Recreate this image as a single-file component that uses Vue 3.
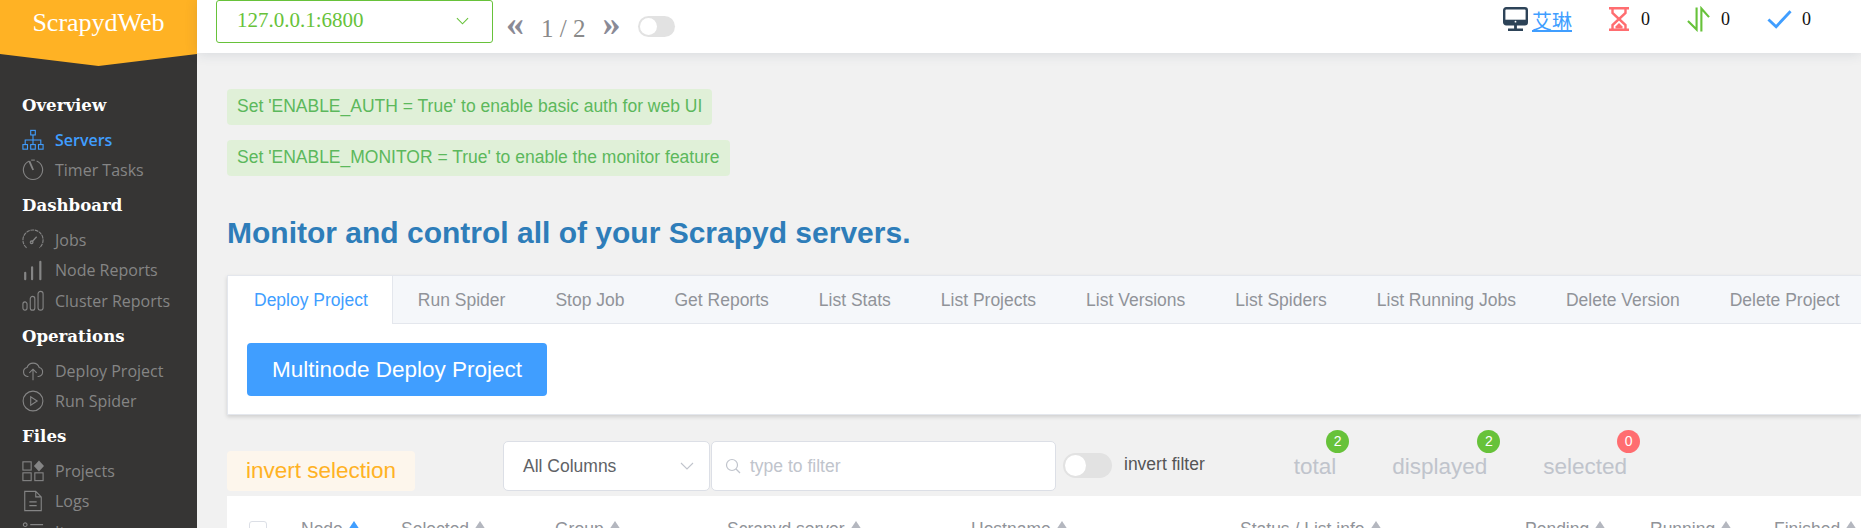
<script setup>
const groups = [
  { title: 'Overview', items: [{ label: 'Servers', icon: 'servers', active: true }, { label: 'Timer Tasks', icon: 'timer' }] },
  { title: 'Dashboard', items: [{ label: 'Jobs', icon: 'gauge' }, { label: 'Node Reports', icon: 'bars' }, { label: 'Cluster Reports', icon: 'pills' }] },
  { title: 'Operations', items: [{ label: 'Deploy Project', icon: 'cloud' }, { label: 'Run Spider', icon: 'play' }] },
  { title: 'Files', items: [{ label: 'Projects', icon: 'grid' }, { label: 'Logs', icon: 'doc' }, { label: 'Items', icon: 'list' }] }
]
const tabs = ['Deploy Project', 'Run Spider', 'Stop Job', 'Get Reports', 'List Stats', 'List Projects', 'List Versions', 'List Spiders', 'List Running Jobs', 'Delete Version', 'Delete Project']
const counters = [
  { label: 'total', count: 2, tone: 'green' },
  { label: 'displayed', count: 2, tone: 'green' },
  { label: 'selected', count: 0, tone: 'red' }
]
const columns = [
  { label: 'Node', w: 100, on: true },
  { label: 'Selected', w: 154 },
  { label: 'Group', w: 172 },
  { label: 'Scrapyd server', w: 244 },
  { label: 'Hostname', w: 269 },
  { label: 'Status / List info', w: 285 },
  { label: 'Pending', w: 125 },
  { label: 'Running', w: 124 },
  { label: 'Finished', w: 90 }
]
</script>

<template>
  <div class="page">
    <aside class="side">
      <div class="logo">ScrapydWeb</div>
      <nav class="nav">
        <section v-for="g in groups" :key="g.title" class="group">
          <h3 class="group-title">{{ g.title }}</h3>
          <a v-for="it in g.items" :key="it.label" class="nav-item" :class="{ active: it.active }">
            <svg class="nav-icon" viewBox="0 0 24 24" fill="none" stroke="currentColor" stroke-width="1.2">
              <template v-if="it.icon === 'servers'">
                <rect x="9.5" y="1.5" width="5" height="5" /><rect x="1" y="17" width="5" height="5" /><rect x="9.5" y="17" width="5" height="5" /><rect x="18" y="17" width="5" height="5" />
                <path d="M12 6.5V17M3.5 17v-5h17v5" />
              </template>
              <template v-else-if="it.icon === 'timer'">
                <path d="M8 2.2A10.5 10.5 0 1 0 16 2.2" /><path d="M8 2.2 12.2 12" stroke-width="2" /><path d="M10 1.2h4" />
              </template>
              <template v-else-if="it.icon === 'gauge'">
                <path d="M5 20.500A11 11 0 1 1 19 20.500" stroke-dasharray="4 0.8" /><path d="M10.500 14.500 16 8.500" stroke-width="1.400" /><circle cx="10.500" cy="14.500" r="1.500" />
              </template>
              <template v-else-if="it.icon === 'bars'">
                <path d="M3.500 15v7M11 9v13M20 3v19" stroke-width="2.400" stroke-linecap="round" />
              </template>
              <template v-else-if="it.icon === 'pills'">
                <rect x="1" y="13" width="4.500" height="9" rx="2.250" /><rect x="9" y="7" width="5" height="15" rx="2.500" /><rect x="17.500" y="1.500" width="5.500" height="20.500" rx="2.700" />
              </template>
              <template v-else-if="it.icon === 'cloud'">
                <path d="M7 18H6A5 5 0 0 1 5.500 8.200 7 7 0 0 1 18.800 8.200 5 5 0 0 1 18 18h-1" /><path d="M12 22V10M8 14l4-4 4 4" />
              </template>
              <template v-else-if="it.icon === 'play'">
                <circle cx="12" cy="12" r="10.800" /><path d="M9.500 7.500v9l7-4.500z" />
              </template>
              <template v-else-if="it.icon === 'grid'">
                <rect x="1" y="2" width="9" height="9" /><rect x="1" y="14" width="9" height="8.500" /><rect x="14" y="14" width="9" height="8.500" />
                <path d="M18.500 0.500 24 6.500l-5.500 6-5.500-6z" fill="currentColor" stroke="none" />
              </template>
              <template v-else-if="it.icon === 'doc'">
                <path d="M3 1.500h12l6 6v15H3zM15 1.500v6h6M8 13h8M8 17h8" />
              </template>
              <template v-else>
                <circle cx="3.500" cy="4" r="2" /><circle cx="3.500" cy="12" r="2" /><circle cx="3.500" cy="20" r="2" /><path d="M9 4h14M9 12h14M9 20h14" />
              </template>
            </svg>
            <span>{{ it.label }}</span>
          </a>
        </section>
      </nav>
    </aside>

    <div class="right">
      <header class="top">
        <div class="host-select">
          <span>127.0.0.1:6800</span>
          <svg class="chev" viewBox="0 0 14 8" fill="none" stroke="currentColor" stroke-width="1.200"><path d="M1 1l6 6 6-6" /></svg>
        </div>
        <span class="pager-arrow first">«</span>
        <span class="pager-num">1 / 2</span>
        <span class="pager-arrow">»</span>
        <span class="mini-switch"><i></i></span>

        <div class="status">
          <a class="user">
            <svg class="mon" viewBox="0 0 25 24" fill="none" stroke="#2d4358" stroke-width="2.400">
              <rect x="1.200" y="1.200" width="22.600" height="16" rx="2" />
              <path d="M1 14.500h23" stroke-width="3.600" />
              <path d="M12.500 17v5M5 22.800h15" stroke-width="2.800" />
              <circle cx="12.500" cy="14.700" r="0.900" fill="#fff" stroke="none" />
            </svg>
            <span class="user-name"><span class="gap"> </span><span class="u-text">艾琳</span></span>
          </a>
          <span class="stat hour">
            <svg viewBox="0 0 20 24" fill="none" stroke="#ff6d70" stroke-width="2.400"><path d="M0 1.300h20M0 22.700h20" /><path d="M3.500 2v4L10 12l-6.500 6v4M16.500 2v4L10 12l6.500 6v4" /><path d="M6.500 19.500 10 16l3.500 3.500v2h-7z" fill="#ff6d70" stroke="none" /></svg>
            <b>0</b>
          </span>
          <span class="stat updown">
            <svg viewBox="0 0 24 26" fill="none" stroke="#67c23a" stroke-width="2.200"><path d="M10 1v23L1 15" /><path d="M15 26V2l8 9" /></svg>
            <b>0</b>
          </span>
          <span class="stat check">
            <svg viewBox="0 0 26 20" fill="none" stroke="#409eff" stroke-width="3"><path d="M1.500 10.500 9.500 18 24.500 2" /></svg>
            <b>0</b>
          </span>
        </div>
      </header>

      <main class="main">
        <div class="alert first-alert">Set 'ENABLE_AUTH = True' to enable basic auth for web UI</div>
        <div class="alert">Set 'ENABLE_MONITOR = True' to enable the monitor feature</div>
        <h1 class="title">Monitor and control all of your Scrapyd servers.</h1>

        <section class="card">
          <div class="tabs">
            <div v-for="(t, i) in tabs" :key="t" class="tab" :class="{ on: i === 0 }">{{ t }}</div>
          </div>
          <div class="card-body">
            <button class="primary" type="button">Multinode Deploy Project</button>
          </div>
        </section>

        <div class="tools">
          <div class="invert">invert selection</div>
          <div class="col-select">
            <span>All Columns</span>
            <svg viewBox="0 0 14 8" fill="none" stroke="#c0c4cc" stroke-width="1.100"><path d="M1 1l6 6 6-6" /></svg>
          </div>
          <div class="search">
            <svg viewBox="0 0 16 16" fill="none" stroke="#c0c4cc" stroke-width="1.200"><circle cx="7" cy="7" r="5.500" /><path d="M11 11l4 4" /></svg>
            <span>type to filter</span>
          </div>
          <span class="big-switch"><i></i></span>
          <span class="invert-label">invert filter</span>
          <div class="counters">
            <span v-for="c in counters" :key="c.label" class="counter">
              {{ c.label }}
              <em class="badge" :class="c.tone">{{ c.count }}</em>
            </span>
          </div>
        </div>

        <div class="table">
          <span class="checkbox"></span>
          <span v-for="c in columns" :key="c.label" class="th" :style="{ width: c.w + 'px' }">
            {{ c.label }}<i class="sort" :class="{ on: c.on }"></i>
          </span>
        </div>
      </main>
    </div>
  </div>
</template>

<style scoped>
.page {
  display: flex;
  width: 1861px;
  height: 528px;
  overflow: hidden;
  background: #f1f1f1;
  font-family: "Liberation Sans", Arial, sans-serif;
}
.side {
  flex: 0 0 197px;
  background: #363534;
  color: #858585;
}
.logo {
  height: 66px;
  padding-top: 8px;
  box-sizing: border-box;
  background: #ffb224;
  clip-path: polygon(0 0, 100% 0, 100% 54px, 50% 66px, 0 54px);
  color: #fff;
  text-align: center;
  font: 26px/30px "Liberation Serif", serif;
}
.nav {
  padding: 26px 0 0 22px;
}
.group {
  margin-bottom: 7px;
}
.group-title {
  margin: 0 0 6.500px;
  color: #fff;
  font: bold 16.600px/26px "DejaVu Serif", serif;
}
.nav-item {
  display: flex;
  align-items: center;
  height: 30.400px;
  font: 16px/30px "Open Sans", sans-serif;
}
.nav-item.active {
  color: #409eff;
  font-weight: 600;
}
.nav-icon {
  flex: none;
  width: 22px;
  height: 22px;
  margin-right: 11px;
}
.right {
  flex: 1;
  min-width: 0;
}
.top {
  position: relative;
  z-index: 1;
  display: flex;
  align-items: flex-start;
  height: 53px;
  padding-left: 19px;
  background: #fff;
  box-shadow: 0 1px 12px rgba(40, 60, 90, 0.13);
}
.host-select {
  display: flex;
  align-items: center;
  justify-content: space-between;
  box-sizing: border-box;
  width: 277px;
  height: 43px;
  padding: 0 23px 2px 20px;
  border: 1px solid #67c23a;
  border-radius: 3px;
  color: #67c23a;
  font: 21px "Liberation Serif", serif;
}
.chev {
  width: 13px;
  height: 8px;
}
.pager-arrow {
  margin: 5px 0 0;
  color: #8a8a96;
  font: bold 36px/36px "Liberation Serif", serif;
}
.pager-arrow.first {
  margin-left: 13px;
}
.pager-num {
  margin: 15px 17px 0;
  color: #8a8a8a;
  font: 25px/28px "Liberation Serif", serif;
}
.mini-switch {
  display: block;
  width: 37px;
  height: 21px;
  margin: 16px 0 0 18px;
  border-radius: 11px;
  background: #e2e2e2;
}
.mini-switch i {
  display: block;
  width: 17px;
  height: 17px;
  margin: 2px;
  border-radius: 50%;
  background: #fff;
}
.status {
  display: flex;
  align-items: center;
  margin-left: auto;
  height: 38px;
  padding-right: 50px;
}
.user {
  display: flex;
  align-items: center;
}
.mon {
  width: 25px;
  height: 24px;
}
.user-name {
  margin-top: 2px;
  color: #409eff;
  font: 20px "Noto Sans CJK SC", sans-serif;
  text-decoration: underline;
}
.gap {
  white-space: pre;
}
.u-text {
  margin-left: 4px;
}
.stat {
  display: flex;
  align-items: center;
  margin-left: 37px;
}
.stat svg {
  width: 20px;
  height: 24px;
  margin-right: 12px;
}
.stat b {
  color: #111;
  font: 18px "Liberation Serif", serif;
}
.updown svg {
  width: 23px;
  height: 26px;
  margin-right: 11px;
}
.check svg {
  width: 25px;
  height: 20px;
  margin-right: 10px;
}
.main {
  padding: 36px 0 0 30px;
}
.alert {
  display: table;
  box-sizing: border-box;
  height: 36px;
  margin-bottom: 15px;
  padding: 0 10px;
  border-radius: 4px;
  background: #e0f0d8;
  color: #5cb85c;
  font-size: 17.500px;
  line-height: 35px;
}
.title {
  margin: 36px 0 22px;
  color: #2e7db9;
  font-size: 30px;
  line-height: 41px;
  font-weight: 700;
}
.card {
  border: 1px solid #e4e7ed;
  border-right: 0;
  background: #fff;
  box-shadow: 0 2px 4px rgba(0, 0, 0, 0.14);
}
.tabs {
  display: flex;
  height: 48px;
  background: #f5f7fa;
  border-bottom: 1px solid #e4e7ed;
  box-sizing: border-box;
}
.tab {
  padding: 0 25px;
  color: #909399;
  font-size: 17.500px;
  line-height: 49px;
  white-space: nowrap;
}
.tab.on {
  margin-bottom: -1px;
  padding: 0 24px 0 26px;
  background: #fff;
  border-right: 1px solid #e4e7ed;
  color: #409eff;
}
.card-body {
  padding: 19px;
  height: 90px;
  box-sizing: border-box;
}
.primary {
  display: block;
  width: 300px;
  height: 53px;
  border: 0;
  border-radius: 4px;
  background: #409eff;
  color: #fff;
  font: 22.500px "Liberation Sans", sans-serif;
}
.tools {
  display: flex;
  align-items: flex-end;
  height: 50px;
  margin-top: 26px;
}
.invert {
  width: 188px;
  height: 40px;
  border-radius: 4px;
  background: #fdf6ec;
  color: #ffb224;
  text-align: center;
  font-size: 22.500px;
  line-height: 40px;
}
.col-select {
  display: flex;
  align-items: center;
  justify-content: space-between;
  box-sizing: border-box;
  width: 207px;
  height: 50px;
  margin-left: 88px;
  padding: 0 15px 0 19px;
  border: 1px solid #dcdfe6;
  border-radius: 5px;
  background: #fff;
  color: #606266;
  font-size: 17.500px;
}
.col-select svg {
  width: 14px;
  height: 8px;
}
.search {
  display: flex;
  align-items: center;
  box-sizing: border-box;
  width: 345px;
  height: 50px;
  margin-left: 1px;
  padding-left: 13px;
  border: 1px solid #dcdfe6;
  border-radius: 5px;
  background: #fff;
  color: #c0c4cc;
  font-size: 17.500px;
}
.search svg {
  width: 16px;
  height: 16px;
  margin-right: 9px;
}
.big-switch {
  display: block;
  width: 49px;
  height: 25px;
  margin: 0 0 13px 7px;
  border-radius: 13px;
  background: #e2e2e2;
}
.big-switch i {
  display: block;
  width: 21px;
  height: 21px;
  margin: 2px;
  border-radius: 50%;
  background: #fff;
}
.invert-label {
  margin: 0 0 16px 12px;
  color: #555;
  font-size: 17.500px;
}
.counters {
  display: flex;
  margin: 0 0 11px 89px;
}
.counter {
  position: relative;
  margin-right: 56px;
  color: #c0c4cc;
  font-size: 22.500px;
}
.badge {
  position: absolute;
  top: -24px;
  right: -13px;
  width: 23px;
  height: 23px;
  border-radius: 12px;
  color: #fff;
  font-size: 14px;
  font-style: normal;
  line-height: 23px;
  text-align: center;
}
.badge.green {
  background: #67c23a;
}
.badge.red {
  background: #ff6d70;
}
.table {
  display: flex;
  align-items: center;
  height: 60px;
  margin-top: 5px;
  padding: 7px 0 0 22px;
  background: #fff;
  box-sizing: border-box;
  white-space: nowrap;
  color: #909399;
  font-size: 17.500px;
}
.checkbox {
  flex: none;
  box-sizing: border-box;
  width: 18px;
  height: 18px;
  margin-right: 34px;
  border: 1px solid #dcdfe6;
  border-radius: 3px;
}
.th {
  flex: none;
}
.sort {
  display: inline-block;
  width: 0;
  height: 0;
  margin-left: 5px;
  vertical-align: 5px;
  border: 6.500px solid transparent;
  border-top: 0;
  border-bottom: 9px solid #b4b7bf;
}
.sort.on {
  border-bottom-color: #409eff;
}
</style>
